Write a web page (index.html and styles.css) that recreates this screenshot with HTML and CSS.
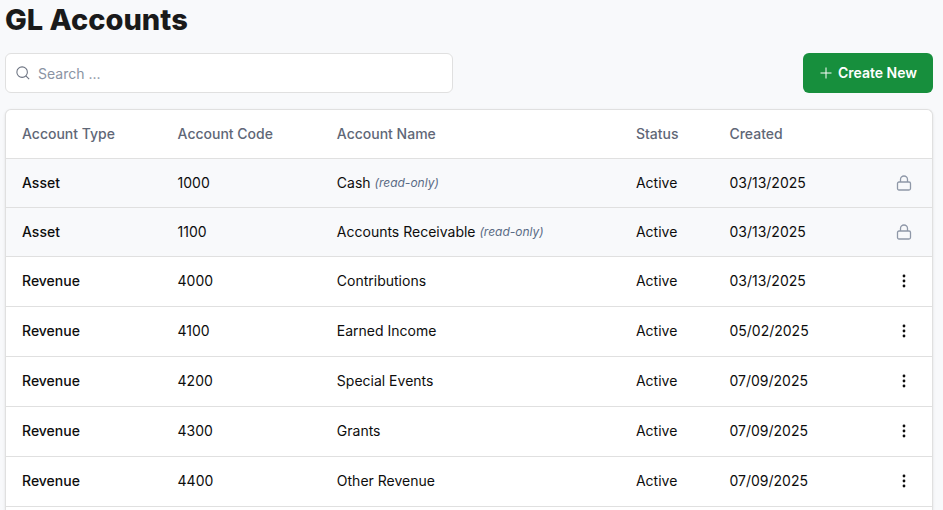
FILE: index.html
```
<!DOCTYPE html>
<html lang="en">
<head>
  <meta charset="UTF-8" />
  <meta name="viewport" content="width=device-width, initial-scale=1" />
  <title>GL Accounts</title>
  <link rel="stylesheet" href="styles.css">
</head>
<body>
  <!-- shared icons -->
  <svg class="sprite" aria-hidden="true">
    <symbol id="icon-lock" viewBox="0 0 16 16">
      <rect x="1.5" y="7" width="13" height="8" rx="1.5" />
      <path d="M4.5 7V4.5a3.5 3.5 0 0 1 7 0V7" />
    </symbol>
    <symbol id="icon-dots" viewBox="0 0 16 16">
      <circle cx="8" cy="3" r="1.4" />
      <circle cx="8" cy="8" r="1.4" />
      <circle cx="8" cy="13" r="1.4" />
    </symbol>
  </svg>

  <h1>GL Accounts</h1>

  <div class="toolbar">
    <div class="search">
      <svg class="search-icon" viewBox="0 0 16 16" aria-hidden="true">
        <circle cx="7" cy="7" r="6" />
        <path d="M11.3 11.3l3.7 3.7" />
      </svg>
      <input type="text" placeholder="Search ..." aria-label="Search" />
    </div>
    <button class="btn-create" type="button">
      <svg viewBox="0 0 12 12" aria-hidden="true"><path d="M6 .5v11M.5 6h11" /></svg>
      Create New
    </button>
  </div>

  <div class="card">
    <table>
      <thead>
        <tr>
          <th class="col-type">Account Type</th>
          <th class="col-code">Account Code</th>
          <th class="col-name">Account Name</th>
          <th class="col-status">Status</th>
          <th class="col-created">Created</th>
          <td class="col-action"></td>
        </tr>
      </thead>
      <tbody>
        <tr class="locked">
          <td class="type">Asset</td><td>1000</td>
          <td>Cash <em>(read-only)</em></td>
          <td>Active</td><td>03/13/2025</td>
          <td class="action"><svg class="lock"><use href="#icon-lock" /></svg></td>
        </tr>
        <tr class="locked">
          <td class="type">Asset</td><td>1100</td>
          <td>Accounts Receivable <em>(read-only)</em></td>
          <td>Active</td><td>03/13/2025</td>
          <td class="action"><svg class="lock"><use href="#icon-lock" /></svg></td>
        </tr>
        <tr>
          <td class="type">Revenue</td><td>4000</td><td>Contributions</td>
          <td>Active</td><td>03/13/2025</td>
          <td class="action"><button class="menu" type="button" aria-label="Actions"><svg><use href="#icon-dots" /></svg></button></td>
        </tr>
        <tr>
          <td class="type">Revenue</td><td>4100</td><td>Earned Income</td>
          <td>Active</td><td>05/02/2025</td>
          <td class="action"><button class="menu" type="button" aria-label="Actions"><svg><use href="#icon-dots" /></svg></button></td>
        </tr>
        <tr>
          <td class="type">Revenue</td><td>4200</td><td>Special Events</td>
          <td>Active</td><td>07/09/2025</td>
          <td class="action"><button class="menu" type="button" aria-label="Actions"><svg><use href="#icon-dots" /></svg></button></td>
        </tr>
        <tr>
          <td class="type">Revenue</td><td>4300</td><td>Grants</td>
          <td>Active</td><td>07/09/2025</td>
          <td class="action"><button class="menu" type="button" aria-label="Actions"><svg><use href="#icon-dots" /></svg></button></td>
        </tr>
        <tr>
          <td class="type">Revenue</td><td>4400</td><td>Other Revenue</td>
          <td>Active</td><td>07/09/2025</td>
          <td class="action"><button class="menu" type="button" aria-label="Actions"><svg><use href="#icon-dots" /></svg></button></td>
        </tr>
      </tbody>
    </table>
  </div>
</body>
</html>
```
FILE: styles.css
```
* { box-sizing: border-box; }
body {
  margin: 0; padding: 0 10px 0 5px;
  min-height: 100vh;
  display: flex; flex-direction: column;
  font-family: Inter, "Liberation Sans", sans-serif;
  font-size: 14px; line-height: 20px;
  background: #f8f9fb; color: #1a1a1a;
}
.sprite { display: none; }
h1 {
  margin: 0 0 13px;
  font-size: 29px; line-height: 40px; font-weight: 800;
}

.toolbar {
  display: flex; justify-content: space-between; gap: 16px;
  margin-bottom: 16px;
}
.search {
  display: flex; align-items: center; gap: 8px;
  flex: 0 1 448px; height: 40px; padding: 0 10px;
  background: #fff;
  border: 1px solid #e0e0e0; border-radius: 6px;
}
.search-icon {
  width: 14px; height: 14px; flex: none;
  fill: none; stroke: #6b7280; stroke-width: 1.2;
}
.search input {
  flex: 1; min-width: 0; padding: 2px 0 0;
  border: none; outline: none; background: none;
  font: inherit; color: inherit;
}
.search input::placeholder { color: #8a93a3; opacity: 1; }
.btn-create {
  display: flex; align-items: center; gap: 6px;
  height: 40px; padding: 0 16px 0 17px;
  border: none; border-radius: 6px;
  background: #178f3d; color: #fff;
  font: inherit; font-weight: 600;
  white-space: nowrap; cursor: pointer;
}
.btn-create svg { width: 12px; height: 12px; fill: none; stroke: #fff; stroke-width: 1; }

.card {
  flex: 1 0 auto;
  background: #fff;
  border: 1px solid #e0e0e0; border-bottom: none;
  border-radius: 6px 6px 0 0;
  box-shadow: 0 1px 3px rgba(0,0,0,0.1);
  overflow: hidden;
}
table {
  width: 100%; table-layout: fixed;
  border-collapse: separate; border-spacing: 0;
  color: #0d0d0d;
}
th, td {
  height: 49px; padding: 0 16px;
  border-bottom: 1px solid #e0e0e0;
  text-align: left; vertical-align: middle;
}
th { font-weight: 500; color: #5f6777; }
tbody td { height: 50px; padding-bottom: 1px; }
tbody .locked td { height: 49px; padding-bottom: 0; background: #f8f9fb; }
.col-type { width: 16.8%; }
.col-code { width: 17.2%; }
.col-name { width: 32.3%; }
.col-status { width: 10.1%; }
.col-action { width: 56px; }
.type { font-weight: 500; }
em { font-size: 12px; color: #5a6b85; vertical-align: 1px; }

.action svg { display: block; width: 16px; height: 16px; margin: 0 auto; }
.lock { fill: none; stroke: #8f98a8; stroke-width: 1.3; }
.menu {
  display: block; width: 24px; height: 24px; padding: 0;
  border: none; background: none; cursor: pointer;
}
.menu svg { fill: #0d0d0d; }
```
